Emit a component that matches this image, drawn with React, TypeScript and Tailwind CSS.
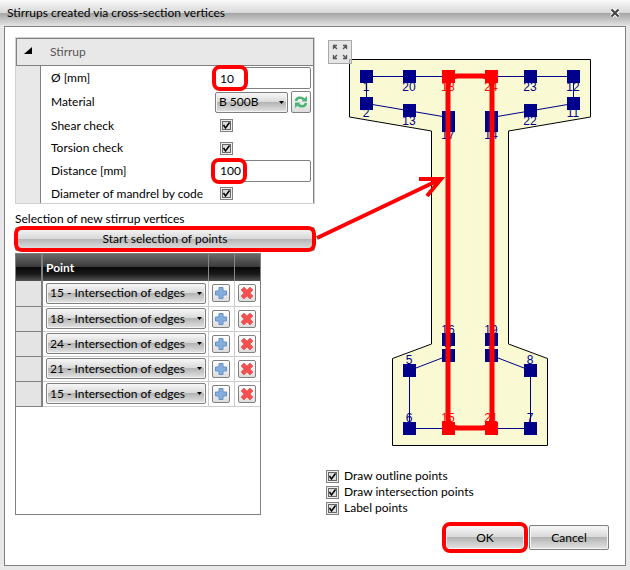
import { ReactNode, useState } from "react";

const points = ["15", "18", "24", "21", "15"];

const gloss = "bg-[linear-gradient(#f8f8f8,#d8d8d8_49%,#b4b4b4_50%,#e4e4e4)]";
const glossBtn = `${gloss} border border-[#808080] rounded-xs shadow-[inset_0_0_0_1px_#f4f4f4]`;
const iconBtn = "flex items-center justify-center border border-[#808080] rounded-xs bg-[linear-gradient(#fff,#ddd)]";
const darkCell = "bg-[linear-gradient(#6a6a6a,#3a3a3a_48%,#080808_50%,#1a1a1a_75%,#555)]";

interface Marker {
  x: number;
  y: number;
  label?: string;
  labelY?: number;
  red?: boolean;
}

const markers: Marker[] = [
  { x: 38, y: 36, label: "1", labelY: 51 },
  { x: 81, y: 36, label: "20", labelY: 51 },
  { x: 202, y: 36, label: "23", labelY: 51 },
  { x: 245, y: 36, label: "12", labelY: 51 },
  { x: 38, y: 63, label: "2", labelY: 77 },
  { x: 81, y: 70, label: "13", labelY: 85 },
  { x: 202, y: 70, label: "22", labelY: 85 },
  { x: 245, y: 63, label: "11", labelY: 77 },
  { x: 120, y: 77 },
  { x: 163, y: 77 },
  { x: 120, y: 85, label: "17", labelY: 99 },
  { x: 163, y: 85, label: "14", labelY: 99 },
  { x: 120, y: 299, label: "16", labelY: 294 },
  { x: 163, y: 299, label: "19", labelY: 294 },
  { x: 120, y: 315, label: "4", labelY: 309 },
  { x: 163, y: 315, label: "9", labelY: 309 },
  { x: 81, y: 330, label: "5", labelY: 324 },
  { x: 202, y: 330, label: "8", labelY: 324 },
  { x: 81, y: 388, label: "6", labelY: 382 },
  { x: 202, y: 388, label: "7", labelY: 382 },
  { x: 120, y: 36, label: "18", labelY: 51, red: true },
  { x: 163, y: 36, label: "24", labelY: 51, red: true },
  { x: 120, y: 388, label: "15", labelY: 382, red: true },
  { x: 163, y: 388, label: "21", labelY: 382, red: true },
];

function Highlight({ className }: { className: string }) {
  return (
    <span className={`absolute border-4 border-[#ff0000] rounded-lg pointer-events-none ${className}`} />
  );
}

function Check({ id }: { id: string }) {
  const [checked, setChecked] = useState(true);
  return (
    <span className="relative flex w-[13px] h-[13px] shrink-0">
      <input
        id={id}
        type="checkbox"
        checked={checked}
        onChange={(e) => setChecked(e.target.checked)}
        className="appearance-none w-[13px] h-[13px] border border-[#808080] bg-[#dcdcdc] shadow-[inset_0_0_0_1px_#eee,inset_0_0_0_2px_#666]"
      />
      {checked && (
        <svg viewBox="0 0 13 13" className="absolute inset-0 pointer-events-none">
          <path d="M3.500 6 5.500 9 9.500 3.500" fill="none" stroke="#000" strokeWidth="1.5" />
        </svg>
      )}
    </span>
  );
}

function Row({ label, id, className, children }: { label: string; id: string; className: string; children: ReactNode }) {
  return (
    <div className={`flex items-center pl-[10px] pr-[2px] ${className}`}>
      <label htmlFor={id} className="w-[163px] shrink-0 whitespace-nowrap">{label}</label>
      {children}
    </div>
  );
}

function Dropdown({ id, label, options, initial, className }: { id?: string; label: string; options: string[]; initial: string; className: string }) {
  return (
    <span className={`relative flex ${className}`}>
      <select
        id={id}
        aria-label={label}
        defaultValue={initial}
        className={`${glossBtn} appearance-none w-full h-[21px] pl-[3px] leading-[18px]`}
      >
        {options.map((o) => (
          <option key={o}>{o}</option>
        ))}
      </select>
      <svg width="5" height="3" className="absolute right-1 top-[9px] pointer-events-none">
        <path d="M0 0H5L2.5 3Z" fill="#000" />
      </svg>
    </span>
  );
}

function RefreshIcon() {
  return (
    <svg width="14" height="14" viewBox="0 0 14 14" fill="none" stroke="#4cb377" strokeWidth="2.6">
      <path d="M2 6C2.5 2.500 7 1.500 10 4.500" />
      <path d="M12 8C11.500 11.500 7 12.500 4 9.500" />
      <path d="M13 1V6.500H7.500ZM1 13V7.500H6.500Z" fill="#4cb377" stroke="none" />
    </svg>
  );
}

function PlusIcon() {
  return (
    <svg width="14" height="14" viewBox="0 0 14 14">
      <path d="M5 1.500H9V5H12.500V9H9V12.500H5V9H1.500V5H5Z" fill="#84aedd" stroke="#6492c8" />
    </svg>
  );
}

function DeleteIcon() {
  return (
    <svg width="14" height="14" viewBox="0 0 14 14">
      <path d="M4 1 7 4 10 1 13 4 10 7 13 10 10 13 7 10 4 13 1 10 4 7 1 4Z" fill="#f45050" stroke="#dd3c3c" strokeWidth="0.5" />
    </svg>
  );
}

function StirrupProperties() {
  return (
    <section className="h-[167px] overflow-hidden border border-[#d0d0d0] bg-[#e8e8e8]">
      <div className="h-full border-t border-r border-[#808080]">
        <h2 className="flex items-center h-[27px] border-b border-l border-[#808080] text-[#555]">
          <svg width="8" height="7" className="ml-[7px] mr-[18px] mb-[3px]">
            <path d="M8 0V7H0Z" fill="#000" />
          </svg>
          Stirrup
        </h2>
        <div className="ml-6 border-l border-[#808080] bg-white">
          <Row label="Ø [mm]" id="diameter" className="h-6">
            <span className="relative flex flex-1">
              <input id="diameter" defaultValue="10" className="w-full h-[22px] border border-[#808080] rounded-xs pl-[5px]" />
              <Highlight className="-left-[2px] -top-[2px] w-9 h-[26px]" />
            </span>
          </Row>
          <Row label="Material" id="material" className="h-6">
            <Dropdown id="material" label="Material" options={["B 500B"]} initial="B 500B" className="w-[73px] ml-[1px]" />
            <button aria-label="Refresh" className={`${iconBtn} ml-[3px] w-5 h-[22px]`}>
              <RefreshIcon />
            </button>
          </Row>
          <Row label="Shear check" id="shear" className="h-[23px]">
            <span className="pl-[6px]"><Check id="shear" /></span>
          </Row>
          <Row label="Torsion check" id="torsion" className="h-[22px]">
            <span className="pl-[6px]"><Check id="torsion" /></span>
          </Row>
          <Row label="Distance [mm]" id="distance" className="h-[23px]">
            <span className="relative flex flex-1">
              <input id="distance" defaultValue="100" className="w-full h-[22px] border border-[#808080] rounded-xs pl-[5px]" />
              <Highlight className="-left-[3px] -top-[2px] w-9 h-[26px]" />
            </span>
          </Row>
          <Row label="Diameter of mandrel by code" id="mandrel" className="h-[23px]">
            <span className="pl-[6px]"><Check id="mandrel" /></span>
          </Row>
        </div>
      </div>
    </section>
  );
}

function PointTable() {
  const options = Array.from(new Set(points)).map((p) => `${p} - Intersection of edges`);
  return (
    <div className="w-[246px] h-[262px] border border-[#808080]">
      <table className="w-full table-fixed border-collapse">
        <colgroup>
          <col className="w-[26px]" />
          <col />
          <col className="w-[26px]" />
          <col className="w-[26px]" />
        </colgroup>
        <thead>
          <tr className="h-[27px] text-white text-left">
            <th className={`${darkCell} border-r-2 border-[#808080]`} />
            <th className={`${darkCell} border-r border-[#888] pl-[3px] font-bold`}>Point</th>
            <th className={`${darkCell} border-r border-[#888]`} />
            <th className={darkCell} />
          </tr>
        </thead>
        <tbody>
          {points.map((p, i) => (
            <tr key={i} className="h-[25px]">
              <td className="bg-[#e4e4e4] border-b border-r-2 border-b-[#808080] border-r-[#808080]" />
              <td className="border-b border-r border-[#ccc] pl-[3px] pr-[2px]">
                <Dropdown
                  label={`Point ${i + 1}`}
                  options={options}
                  initial={`${p} - Intersection of edges`}
                  className="w-full"
                />
              </td>
              <td className="border-b border-r border-[#ccc]">
                <button aria-label="Add point" className={`${iconBtn} w-[18px] h-[18px] mx-auto`}>
                  <PlusIcon />
                </button>
              </td>
              <td className="border-b border-[#ccc]">
                <button aria-label="Remove point" className={`${iconBtn} w-[18px] h-[18px] mx-auto`}>
                  <DeleteIcon />
                </button>
              </td>
            </tr>
          ))}
        </tbody>
      </table>
    </div>
  );
}

function CrossSection() {
  return (
    <svg width="264" height="410" viewBox="0 0 264 410" fontFamily="Liberation Sans, sans-serif" fontSize="12" textAnchor="middle">
      <path
        d="M21.500 19.500H262.500V77L180.500 91V304L219.500 318.500V405.500H64.500V318.500L103.500 304V91L21.500 77Z"
        fill="#f9f9d4"
        stroke="#000"
      />
      <g fill="none" stroke="#00008b">
        <path d="M120.500 77.500 38.500 63.500V36.500H245.500V63.500L163.500 77.500" />
        <path d="M120.500 315.500 81.500 330.500V388.500H202.500V330.500L163.500 315.500" />
      </g>
      {markers.map((m, i) => (
        <g key={i} fill={m.red ? "#ff0000" : "#00008b"}>
          <rect x={m.x - 6} y={m.y - 6} width="13" height="13" />
          {m.label && <text x={m.x} y={m.labelY}>{m.label}</text>}
        </g>
      ))}
      <rect x="120" y="36" width="44" height="352" rx="10" fill="none" stroke="#ff0000" strokeWidth="5" />
    </svg>
  );
}

export default function App() {
  return (
    <div className="relative flex flex-col min-h-screen px-1 pb-1 bg-[#e8e8e8] text-xs leading-4 text-black font-['Lato',sans-serif]">
      <header className="flex items-center justify-between h-[26px] -mx-1 pl-[7px] pr-[10px] bg-[linear-gradient(#fafafa,#d8d8d8_49%,#a4a4a4_50%,#e4e4e4)]">
        <h1>Stirrups created via cross-section vertices</h1>
        <button aria-label="Close" className="flex">
          <svg width="10" height="10" viewBox="0 0 10 10">
            <path d="M1.500 1.500 8.500 8.500M8.500 1.500 1.500 8.500" stroke="#fff" strokeWidth="4" />
            <path d="M1.500 1.500 8.500 8.500M8.500 1.500 1.500 8.500" stroke="#444" strokeWidth="2.2" />
          </svg>
        </button>
      </header>

      <main className="flex flex-1 justify-between border border-[#808080] bg-white pl-[10px] pr-4 pt-[10px]">
        <div className="w-[300px] shrink-0">
          <StirrupProperties />
          <p className="mt-[7px]">Selection of new stirrup vertices</p>
          <div className="relative">
            <button className={`${glossBtn} block w-full h-6`}>Start selection of points</button>
            <Highlight className="-inset-[1px]" />
          </div>
          <div className="mt-[2px]">
            <PointTable />
          </div>
        </div>

        <div className="flex flex-col w-[284px] shrink-0 pl-[1px]">
          <div className="relative mt-[3px] ml-[2px]">
            <CrossSection />
            <button aria-label="Zoom to fit" className="absolute left-0 top-0 w-6 h-6 border border-[#a8a8a8] bg-[#dcdcdc]/70">
              <svg viewBox="0 0 22 22" fill="none" stroke="#555" strokeWidth="1.300">
                <path d="M4.500 8V4.500H8M4.500 4.500 8 8M14 4.500H17.500V8M17.500 4.500 14 8M4.500 14V17.500H8M4.500 17.500 8 14M14 17.500H17.500V14M17.500 17.500 14 14" />
              </svg>
            </button>
          </div>
          <div className="mt-[18px]">
            {["Draw outline points", "Draw intersection points", "Label points"].map((text) => (
              <label key={text} htmlFor={text} className="flex items-center gap-[5px] h-4">
                <Check id={text} />
                {text}
              </label>
            ))}
          </div>
          <div className="flex justify-end gap-1 mt-[9px]">
            <div className="relative">
              <button className={`${glossBtn} block w-20 h-[25px]`}>OK</button>
              <Highlight className="-inset-[3px]" />
            </div>
            <button className={`${glossBtn} block w-20 h-[25px]`}>Cancel</button>
          </div>
        </div>
      </main>

      <svg width="140" height="80" viewBox="0 0 140 80" className="absolute left-[310px] top-[165px] pointer-events-none" fill="none" stroke="#ff0000" strokeWidth="4">
        <path d="M7 73 131 14M109 14H131L117 31" />
      </svg>
    </div>
  );
}
